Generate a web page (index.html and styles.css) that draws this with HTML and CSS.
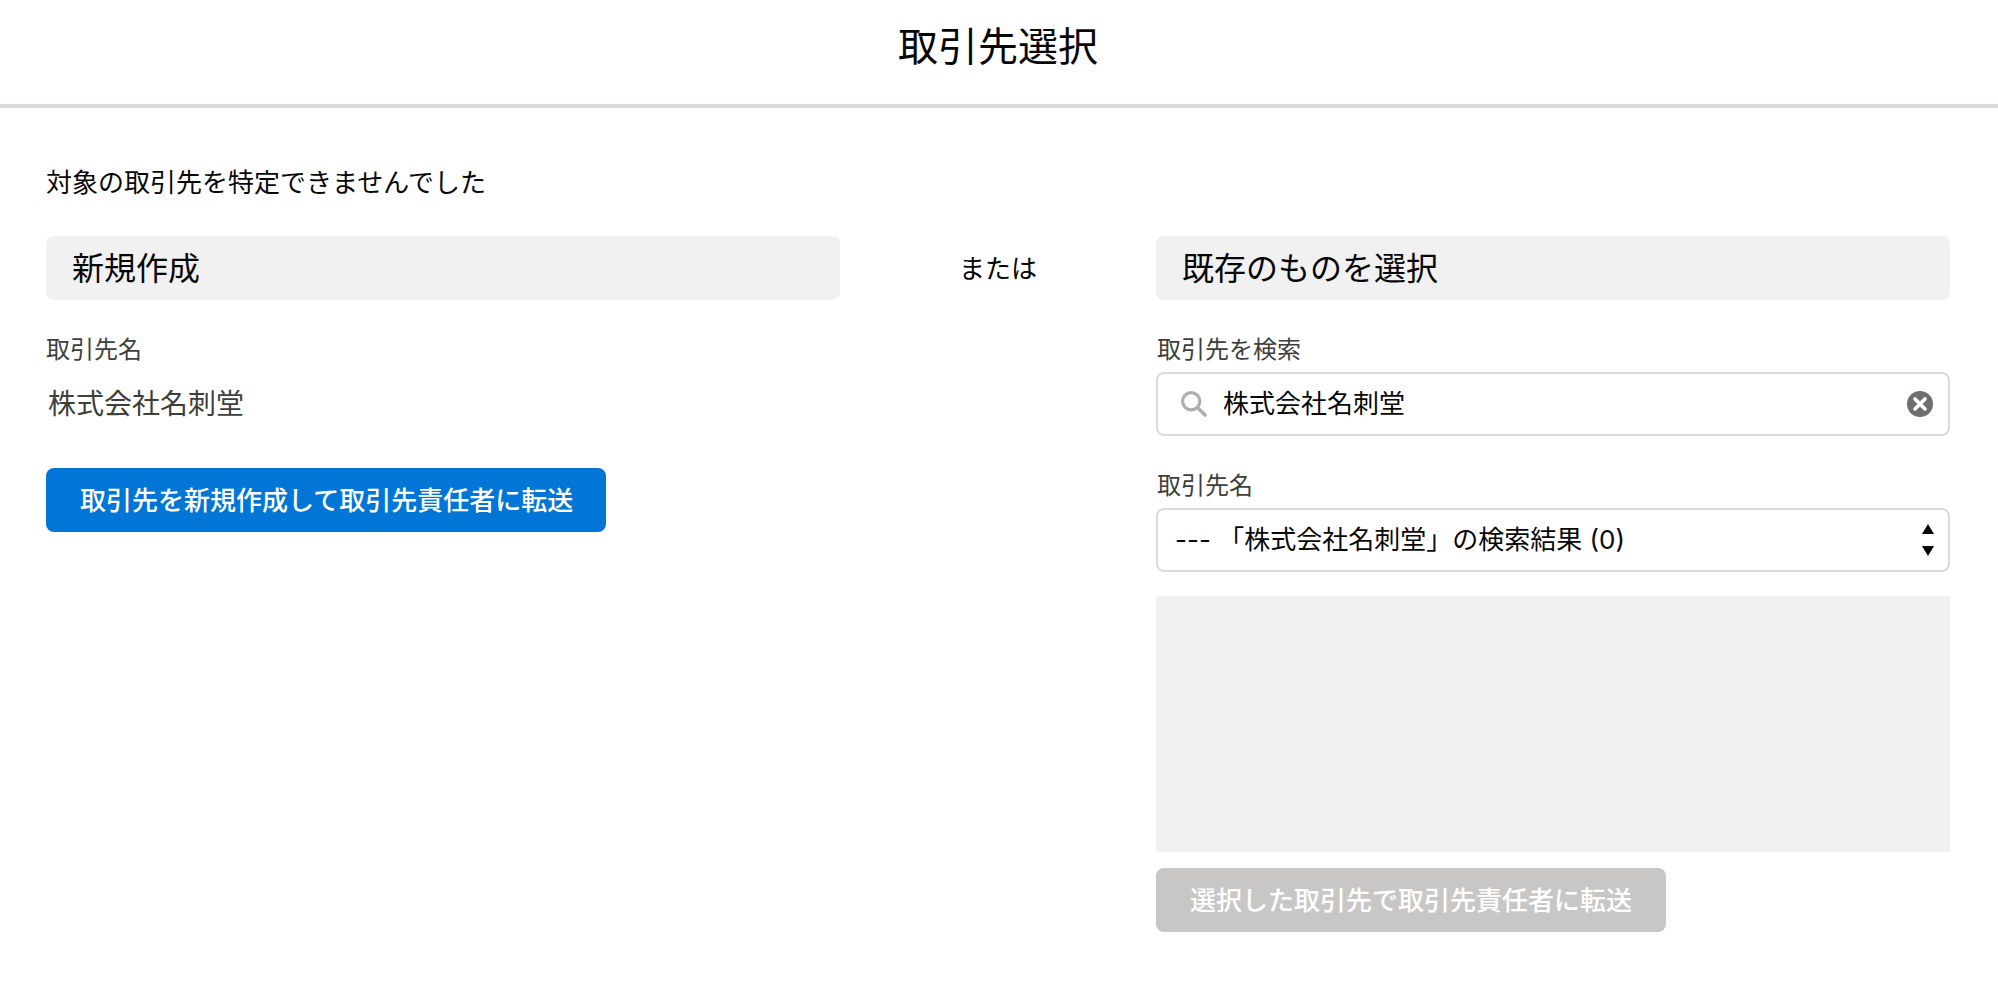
FILE: index.html
```html
<!DOCTYPE html>
<html lang="ja">
<head>
<meta charset="utf-8">
<title>取引先選択</title>
<link rel="stylesheet" href="styles.css">
</head>
<body>
<header class="header"><h1 class="title">取引先選択</h1></header>
<main class="main">
  <p class="message">対象の取引先を特定できませんでした</p>
  <div class="columns">
    <section class="column">
      <h2 class="heading">新規作成</h2>
      <div class="label label-new">取引先名</div>
      <div class="value">株式会社名刺堂</div>
      <button class="button button-primary">取引先を新規作成して取引先責任者に転送</button>
    </section>
    <div class="or">または</div>
    <section class="column">
      <h2 class="heading">既存のものを選択</h2>
      <div class="label">取引先を検索</div>
      <div class="field search">
        <svg class="search-icon" viewBox="0 0 26 26" width="26" height="26"><circle cx="10.2" cy="10.2" r="8.6" fill="none" stroke="#b0adab" stroke-width="3.2"/><path d="M16.6 16.6L24 24" stroke="#b0adab" stroke-width="3.6" stroke-linecap="round"/></svg>
        <span class="field-text">株式会社名刺堂</span>
        <svg class="clear-icon" viewBox="0 0 26 26" width="26" height="26"><circle cx="13" cy="13" r="13" fill="#706e6b"/><path d="M8 8L18 18M18 8L8 18" stroke="#fff" stroke-width="3.6" stroke-linecap="round"/></svg>
      </div>
      <div class="label">取引先名</div>
      <div class="field select">
        <span class="field-text">--- 「株式会社名刺堂」の検索結果 (0)</span>
        <svg class="arrows" viewBox="0 0 12 32" width="12" height="32"><path d="M0 10L6 0L12 10ZM0 22H12L6 32Z" fill="#080707"/></svg>
      </div>
      <div class="panel"></div>
      <button class="button button-disabled" disabled>選択した取引先で取引先責任者に転送</button>
    </section>
  </div>
</main>
</body>
</html>
```
FILE: styles.css
```css
* { box-sizing: border-box; }
body {
  margin: 0;
  background: #fff;
  color: #080707;
  font-family: Inter, "Noto Sans CJK JP", sans-serif;
  font-size: 26px;
}
h1, h2, p { margin: 0; font-weight: 400; }
.header {
  height: 108px;
  padding: 17px 2px 0 0;
  border-bottom: 4px solid #dddbda;
  text-align: center;
}
.title { font-size: 40px; line-height: 60px; }
.main { padding: 54px 48px 0 46px; }
.message { height: 74px; line-height: 42px; }
.columns { display: grid; grid-template-columns: 794px 316px 794px; }
.heading {
  height: 64px;
  padding-left: 26px;
  border-radius: 8px;
  background: #f1f1f1;
  font-size: 32px;
  line-height: 65px;
}
.or { line-height: 66px; text-align: center; }
.label {
  height: 40px;
  margin-top: 29px;
  margin-bottom: 3px;
  padding-left: 1px;
  color: #3e3e3c;
  font-size: 24px;
  line-height: 42px;
}
.label-new { padding-left: 0; }
.value {
  height: 64px;
  padding-left: 2px;
  color: #3e3e3c;
  font-size: 28px;
  line-height: 65px;
}
.button {
  display: block;
  height: 64px;
  padding: 1px 34px 0;
  border: 0;
  border-radius: 8px;
  color: #fff;
  font: inherit;
  font-weight: 500;
  line-height: 63px;
  white-space: nowrap;
}
.button-primary { width: 560px; padding-right: 0; text-align: left; margin-top: 32px; background: #0176d6; }
.button-disabled { margin-top: 16px; background: #c9c7c5; }
.field {
  display: flex;
  align-items: center;
  height: 64px;
  border: 2px solid #dddbda;
  border-radius: 8px;
}
.field-text { flex: 1; white-space: nowrap; line-height: 60px; }
.search { padding: 0 15px 0 23px; gap: 16px; }
.select { padding: 0 14px 0 17px; }
.panel { height: 256px; margin-top: 24px; background: #f1f1f1; }
```
